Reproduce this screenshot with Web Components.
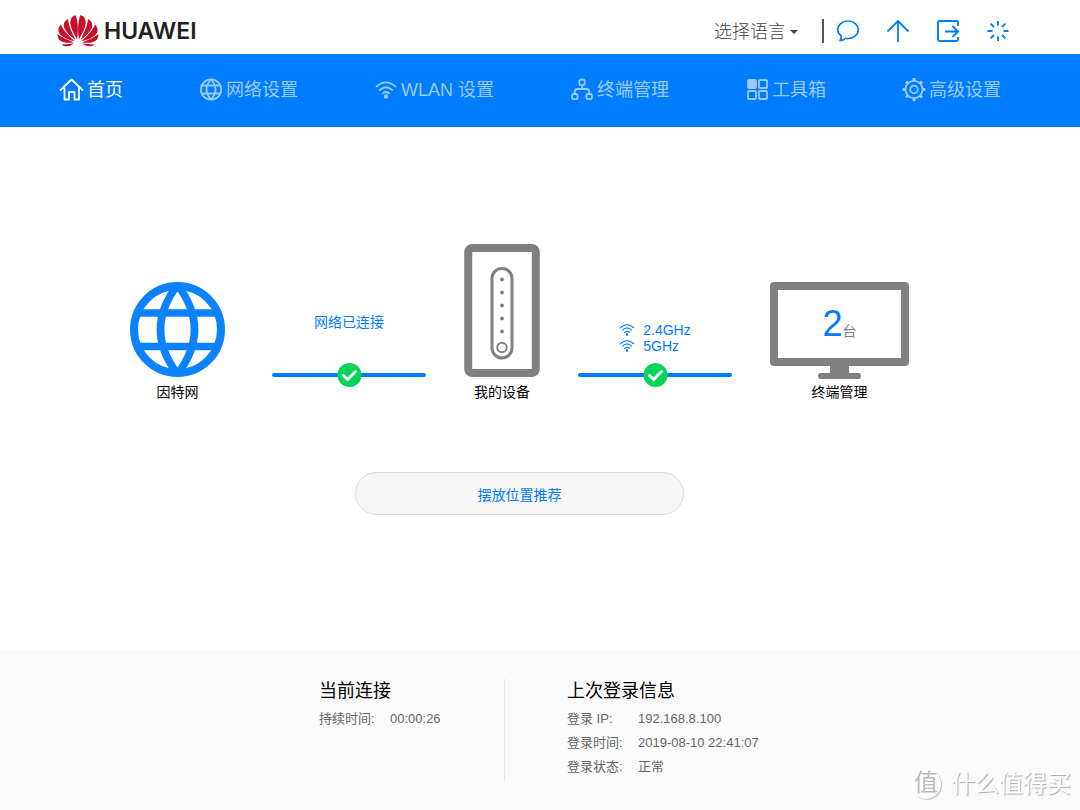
<!DOCTYPE html>
<html lang="zh-CN">
<head>
<meta charset="utf-8">
<meta name="viewport" content="width=device-width, initial-scale=1">
<title>HUAWEI</title>
<style>
  html, body { margin: 0; }
  body {
    font-family: "Liberation Sans", "Noto Sans CJK SC", sans-serif;
    color: #000;
    background: #fff;
    --blue: #007dff;
    --grey: #808080;
  }
</style>
</head>
<body>
<router-app></router-app>

<template id="router-app">
  <style>
    :host { display: flex; flex-direction: column; min-height: 100vh; }
    main { flex: 1; display: flex; flex-direction: column; align-items: center; gap: 70px; padding: 117px 41px 70px 0; }
    .map { display: flex; align-items: flex-end; gap: 38px; }
    .globe { margin-right: 9px; }
    .screen { position: relative; display: block; }
    .count { position: absolute; inset: 0 0 14px; display: flex; align-items: baseline; justify-content: center; line-height: 84px; color: var(--grey); font-size: 14px; }
    .count b { font-size: 36px; font-weight: 400; color: var(--blue); }
    svg { display: block; }
    .bands { margin: 0; padding: 0; list-style: none; line-height: 16px; }
    .bands li { display: flex; align-items: center; gap: 8px; }
    .place { box-sizing: border-box; width: 329px; height: 43px; border: 1px solid #d9d9d9; border-radius: 22px; background: #f7f7f7; color: var(--blue); font: inherit; font-size: 14px; }
  </style>
  <top-bar></top-bar>
  <main-nav></main-nav>
  <main>
    <div class="map">
      <map-node class="globe" label="因特网">
        <svg width="95" height="95" viewBox="0 0 95 95" fill="none" stroke="#0d82ff" stroke-width="8">
          <circle cx="47.500" cy="47.500" r="43.500"/>
          <path d="M7 31H88M7 64.500H88M47.500 3Q13.500 47.500 47.500 92M47.500 3Q81.500 47.500 47.500 92" stroke-width="7.600"/>
        </svg>
      </map-node>
      <map-link>网络已连接</map-link>
      <map-node label="我的设备">
        <svg width="76" height="133" viewBox="0 0 76 133" fill="none" stroke="#808080">
          <rect x="4.200" y="4" width="67.600" height="125" rx="4" stroke-width="8"/>
          <rect x="28" y="24.500" width="20" height="89.500" rx="10" stroke-width="3"/>
          <circle cx="38" cy="103.500" r="4.700" stroke-width="2"/>
          <g fill="#808080" stroke="none"><circle cx="38" cy="35.500" r="1.900"/><circle cx="38" cy="48.500" r="1.900"/><circle cx="38" cy="61.500" r="1.900"/><circle cx="38" cy="74.500" r="1.900"/><circle cx="38" cy="87.500" r="1.900"/></g>
        </svg>
      </map-node>
      <map-link class="wifi">
        <ul class="bands">
          <li><svg width="16" height="14" viewBox="0 0 16 14" fill="none" stroke="#007dff" stroke-width="1.200"><path d="M1 5Q8-1.800 15 5M3.200 7.400Q8 2.600 12.800 7.400M5.200 9.700Q8 7 10.800 9.700"/><circle cx="8" cy="11.600" r="1.300" fill="#007dff" stroke="none"/></svg>2.4GHz</li>
          <li><svg width="16" height="14" viewBox="0 0 16 14" fill="none" stroke="#007dff" stroke-width="1.200"><path d="M1 5Q8-1.800 15 5M3.200 7.400Q8 2.600 12.800 7.400M5.200 9.700Q8 7 10.800 9.700"/><circle cx="8" cy="11.600" r="1.300" fill="#007dff" stroke="none"/></svg>5GHz</li>
        </ul>
      </map-link>
      <map-node class="terminals" label="终端管理">
        <span class="screen">
          <svg width="139" height="97" viewBox="0 0 139 97">
            <path fill="#808080" fill-rule="evenodd" d="M4 0H135a4 4 0 0 1 4 4V80a4 4 0 0 1-4 4H79v7h9a3 3 0 0 1 0 6H51a3 3 0 0 1 0-6h9v-7H4a4 4 0 0 1-4-4V4a4 4 0 0 1 4-4zM8 8V76H131V8z"/>
          </svg>
          <span class="count"><b>2</b>台</span>
        </span>
      </map-node>
    </div>
    <button class="place" type="button">摆放位置推荐</button>
  </main>
  <status-footer></status-footer>
</template>

<template id="top-bar">
  <style>
    :host { display: flex; align-items: center; justify-content: space-between; box-sizing: border-box; height: 54px; padding: 7px 70px 0 57px; }
    .brand, .tools, button { display: flex; align-items: center; }
    .brand { gap: 5px; font: 600 23px/32px Inter, sans-serif; color: #231f20; text-decoration: none; }
    .tools { gap: 26px; }
    .lang { position: relative; display: flex; align-items: center; padding-top: 2px; margin-right: -2px; }
    select { appearance: none; border: 0; padding: 0 14px 0 0; margin: 0; width: 84px; background: none; color: #444; font: inherit; font-size: 18px; font-weight: 300; line-height: 28px; }
    .caret { position: absolute; right: 0; border: 4px solid transparent; border-top-color: #444; border-bottom: 0; pointer-events: none; }
    .bar { width: 2px; height: 24px; background: #555; margin-right: -14px; }
    button { border: 0; background: none; padding: 0; }
    svg { display: block; }
  </style>
  <a class="brand" href="#">
    <svg width="42" height="32" viewBox="0 0 42 32" fill="#c7102e" aria-hidden="true">
      <g id="half">
        <path d="M20 24.500C16 17 11 9 14.500 2.800Q16 .6 18.800.2C20.300 4 22 14 20 24.500z"/>
        <path d="M18.500 25C12 20 6 14.500 6.800 9.200Q7.500 5.500 11 3.900C11.500 11 15 17 18.500 25z"/>
        <path d="M17.600 26.300C9 24 2.500 21 1.500 16.200Q.9 12.500 4 9.500C6.500 16.500 12 20.500 17.600 26.300z"/>
        <path d="M17 27.500C11 28.200 4.500 28 2 24.500Q.4 22 .5 19C5 23 11 24.500 17 27.500z"/>
        <path d="M16.800 28.600C14 31 8 33 4.800 29.400C9 29.400 13 28.800 16.800 28.600z"/>
      </g>
      <use href="#half" transform="matrix(-1 0 0 1 42 0)"/>
    </svg>HUAWEI</a>
  <div class="tools">
    <label class="lang"><select aria-label="选择语言"><option>选择语言</option></select><span class="caret"></span></label>
    <span class="bar"></span>
    <button type="button" aria-label="消息"><svg width="24" height="24" viewBox="0 0 24 24" fill="none" stroke="#007dff" stroke-width="1.700" stroke-linejoin="round"><path d="M5.200 16.800C2.500 15 1.800 13 1.800 10.800C1.800 6 6 2 12 2S22.200 6 22.200 10.800S18 19.500 12 19.500Q10.800 19.500 9.500 19.300Q7 21.500 4 21.700Q5.500 19.500 5.200 16.800z"/></svg></button>
    <button type="button" aria-label="升级"><svg width="24" height="24" viewBox="0 0 24 24" fill="none" stroke="#007dff" stroke-width="1.800"><path d="M12 23V2M1.500 12.500L12 2L22.500 12.500"/></svg></button>
    <button type="button" aria-label="退出"><svg width="24" height="24" viewBox="0 0 24 24" fill="none" stroke="#007dff" stroke-width="1.900"><path d="M22 7V3.500Q22 2 20.500 2H3.500Q2 2 2 3.500V20.500Q2 22 3.500 22H20.500Q22 22 22 20.500V18M9 12.500H22M16.500 7L22 12.500L16.500 18"/></svg></button>
    <button type="button" aria-label="重启"><svg width="24" height="24" viewBox="0 0 24 24" fill="none" stroke="#007dff" stroke-width="1.900"><path d="M12 2V6.500M12 17.500V22M1.500 12H6.500M17.500 12H22.500M4.600 4.600L8 8M16 16L19.400 19.400M4.600 19.400L8 16M16 8L19.400 4.600"/></svg></button>
  </div>
</template>

<template id="main-nav">
  <style>
    :host { display: block; background: var(--blue); }
    nav { display: flex; justify-content: space-between; align-items: center; height: 73px; padding: 0 79px 2px 59px; box-sizing: border-box; }
    a { display: flex; align-items: center; gap: 3px; font-size: 18px; line-height: 28px; color: #99cbff; text-decoration: none; white-space: nowrap; }
    a.on { color: #fff; }
    svg { display: block; fill: none; stroke: currentColor; stroke-width: 1.800; }
    .fill { fill: currentColor; }
  </style>
  <nav>
    <a class="on" href="#home"><svg width="25" height="24" viewBox="0 0 25 24" stroke-linejoin="round"><path d="M1 12.500L12.500 1.500L24 12.500M5.500 9.500V21.500H10V14H15.500V21.500H20V9.500"/></svg>首页</a>
    <a href="#net"><svg width="24" height="24" viewBox="0 0 24 24"><circle cx="12" cy="11.500" r="10.200"/><path d="M3 7.500H21M3 15.500H21M12 1.500Q3 11.500 12 21.500M12 1.500Q21 11.500 12 21.500"/></svg>网络设置</a>
    <a href="#wlan"><svg width="24" height="24" viewBox="0 0 24 24"><path d="M2 9Q12-.2 22 9M5.200 12.500Q12 6 18.800 12.500M8.200 15.800Q12 12.200 15.800 15.800"/><circle class="fill" cx="12" cy="18.500" r="1.300"/></svg>WLAN 设置</a>
    <a href="#dev"><svg width="24" height="24" viewBox="0 0 24 24"><rect x="9.200" y="1.500" width="5.600" height="5.600" rx="2"/><rect x="2" y="16" width="5.600" height="5.200" rx="2"/><rect x="16.400" y="16" width="5.600" height="5.200" rx="2"/><path d="M12 7.500V11M4.800 16V13.500Q4.800 11 7.500 11H16.500Q19.200 11 19.200 13.500V16"/></svg>终端管理</a>
    <a href="#tools"><svg width="24" height="24" viewBox="0 0 24 24"><rect class="fill" x="3" y="2" width="8" height="8" rx="1"/><rect x="14" y="2" width="8" height="8" rx="1"/><rect x="3" y="13" width="8" height="8" rx="1"/><rect x="14" y="13" width="8" height="8" rx="1"/></svg>工具箱</a>
    <a href="#adv"><svg width="24" height="24" viewBox="0 0 24 24"><circle cx="12" cy="11.500" r="8.600"/><circle cx="12" cy="11.500" r="3.800"/><path stroke-width="3" d="M12 .1V3.100M12 19.900V22.900M.6 11.500H3.600M20.400 11.500H23.400M4 3.500L6 5.500M18 17.500L20 19.500M4 19.500L6 17.500M18 5.500L20 3.500"/></svg>高级设置</a>
  </nav>
</template>

<template id="map-node">
  <style>
    :host { display: flex; flex-direction: column; align-items: center; gap: 5px; }
    :host(.terminals) { gap: 3px; }
    .label { font-size: 14px; line-height: 20px; white-space: nowrap; }
  </style>
  <slot></slot>
  <span class="label"></span>
</template>

<template id="map-link">
  <style>
    :host { display: flex; flex-direction: column; align-items: center; gap: 31px; padding-bottom: 15px; font-size: 14px; line-height: 20px; color: var(--blue); }
    :host(.wifi) { gap: 9px; }
    svg { display: block; }
  </style>
  <slot></slot>
  <svg width="154" height="24" viewBox="0 0 154 24" fill="none" stroke-linecap="round">
    <path d="M2 12H152" stroke="#007dff" stroke-width="4"/>
    <circle cx="77.500" cy="12" r="12" fill="#06d35c"/>
    <path d="M71.500 12.500L75.700 16.500L83.500 8.500" stroke="#fff" stroke-width="3"/>
  </svg>
</template>

<template id="status-footer">
  <style>
    :host { display: flex; justify-content: center; position: relative; padding: 29px 0 29px 2px; background: #fafafa; }
    section { box-sizing: border-box; width: 186px; height: 102px; border-right: 1px solid #e5e5e5; }
    section + section { width: 258px; padding-left: 62px; border: 0; }
    h2 { margin: 0 0 4px; font-size: 18px; line-height: 24px; font-weight: 400; }
    dl { display: grid; grid-template-columns: 71px 1fr; margin: 0; font-size: 13px; line-height: 24px; color: #666; white-space: nowrap; }
    dd { margin: 0; }
    .mark { position: absolute; right: 9px; bottom: 9px; display: flex; align-items: center; gap: 10px; color: #fff; font-size: 24px; line-height: 34px; text-shadow: 1px 1px 1px #aaa; }
    .mark b { width: 30px; height: 30px; border-radius: 50%; background: #fff; box-shadow: 1px 1px 1px #bbb; color: #bbb; font-weight: 400; font-size: 24px; line-height: 28px; text-align: center; text-shadow: none; }
  </style>
  <section>
    <h2>当前连接</h2>
    <dl><dt>持续时间:</dt><dd>00:00:26</dd></dl>
  </section>
  <section>
    <h2>上次登录信息</h2>
    <dl><dt>登录 IP:</dt><dd>192.168.8.100</dd><dt>登录时间:</dt><dd>2019-08-10 22:41:07</dd><dt>登录状态:</dt><dd>正常</dd></dl>
  </section>
  <div class="mark"><b>值</b><span>什么值得买</span></div>
</template>

<script>
  class TemplateElement extends HTMLElement {
    constructor() {
      super();
      const template = document.getElementById(this.localName);
      this.attachShadow({ mode: 'open' }).append(template.content.cloneNode(true));
    }
  }
  class MapNode extends TemplateElement {
    connectedCallback() {
      this.shadowRoot.querySelector('.label').textContent = this.getAttribute('label');
    }
  }
  customElements.define('top-bar', class extends TemplateElement {});
  customElements.define('main-nav', class extends TemplateElement {});
  customElements.define('map-node', MapNode);
  customElements.define('map-link', class extends TemplateElement {});
  customElements.define('status-footer', class extends TemplateElement {});
  customElements.define('router-app', class extends TemplateElement {});
</script>
</body>
</html>
